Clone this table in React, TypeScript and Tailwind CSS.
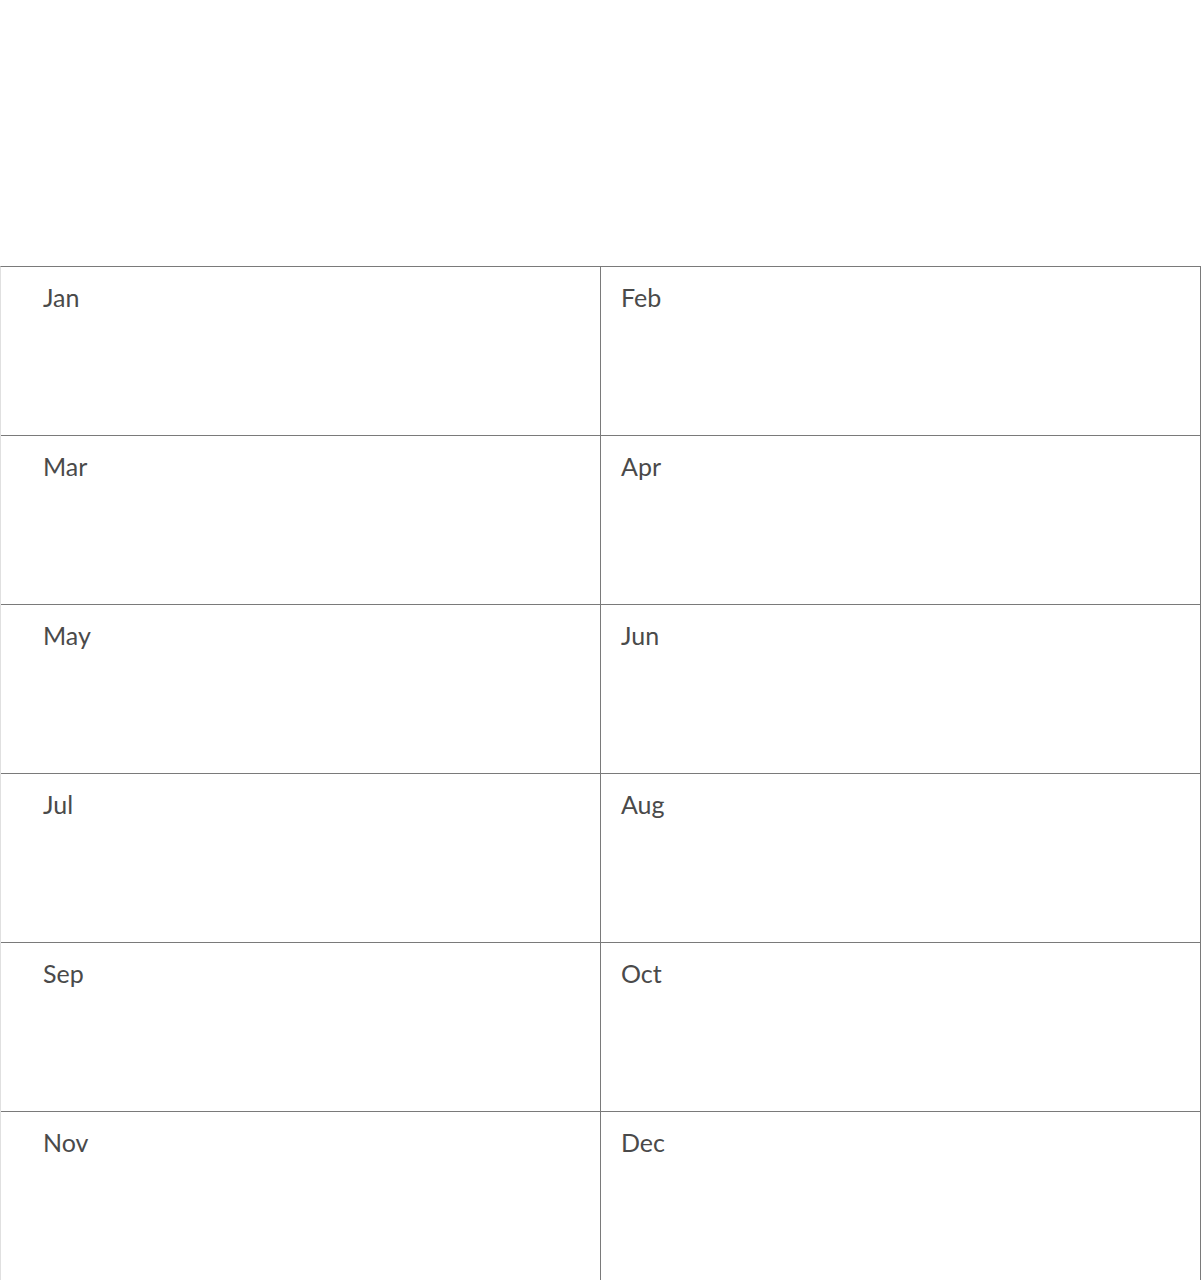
const months = [
  ["Jan", "Feb"],
  ["Mar", "Apr"],
  ["May", "Jun"],
  ["Jul", "Aug"],
  ["Sep", "Oct"],
  ["Nov", "Dec"],
];

export default function App() {
  return (
    <div className="min-h-screen bg-white pt-[266px] font-['Lato','Open_Sans',sans-serif]">
      {/* Year planner grid */}
      <div className="w-[1201px] border-t border-r border-l border-t-[#7a7a7a] border-r-[#7a7a7a] border-l-[#e0e0e0]">
        {months.map(([left, right]) => (
          <div key={left} className="grid grid-cols-[600px_1fr] h-[169px] border-b border-[#7a7a7a]">
            <div className="border-r border-[#7a7a7a] pl-[42px] pt-[12px] text-[25px] text-[#4a4a4a]">{left}</div>
            <div className="pl-[20px] pt-[12px] text-[25px] text-[#4a4a4a]">{right}</div>
          </div>
        ))}
      </div>
    </div>
  );
}
